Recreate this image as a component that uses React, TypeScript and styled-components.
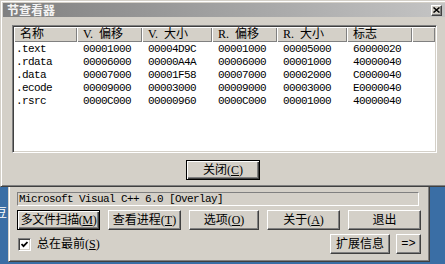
import React from "react";
import styled, { createGlobalStyle, css } from "styled-components";

const FACE = "#d4d0c8";
const SHADOW = "#808080";
const DARK = "#404040";
const UI_FONT = `"Liberation Serif", "Noto Sans CJK SC", serif`;
const MONO_FONT = `"Liberation Mono", "DejaVu Sans Mono", monospace`;
const COLUMNS = "63px 65px 70px 65px 70px 65px 1fr";

const GlobalStyle = createGlobalStyle`
  html, body {
    margin: 0;
    padding: 0;
  }
  body {
    background: #3a6ea5;
    font-family: ${UI_FONT};
    font-size: 12px;
    color: #000;
  }
`;

// classic 3D edges
const frameEdge = css`
  border: 1px solid;
  border-color: ${FACE} ${DARK} ${DARK} ${FACE};
  box-shadow: inset 1px 1px 0 #fff, inset -1px -1px 0 ${SHADOW};
`;

const sunkenEdge = css`
  border: 1px solid;
  border-color: ${SHADOW} #fff #fff ${SHADOW};
  box-shadow: inset 1px 1px 0 ${DARK}, inset -1px -1px 0 ${FACE};
`;

const Desktop = styled.div`
  position: relative;
  width: 445px;
  height: 264px;
  overflow: hidden;
  background: #3a6ea5;
`;

const IconLabel = styled.span`
  position: absolute;
  left: -5px;
  top: 205px;
  color: #fff;
  font-family: "Noto Sans CJK SC", sans-serif;
  font-size: 12px;
  line-height: 14px;
`;

const Dialog = styled.div`
  position: absolute;
  left: 0;
  top: 0;
  z-index: 2;
  box-sizing: border-box;
  width: 448px;
  height: 187px;
  padding: 2px;
  background: ${FACE};
  ${frameEdge}
  display: flex;
  flex-direction: column;
`;

const TitleBar = styled.div`
  height: 14px;
  display: flex;
  align-items: center;
  padding: 0 3px 0 4px;
  background: linear-gradient(to right, #808080, #c4c4c4);
`;

const TitleText = styled.span`
  flex: 1;
  color: #f4f4f4;
  font-family: "Noto Sans CJK SC", sans-serif;
  font-weight: bold;
  font-size: 12px;
  line-height: 14px;
`;

const CloseBox = styled.div`
  box-sizing: border-box;
  width: 11px;
  height: 11px;
  background: ${FACE};
  border: 1px solid;
  border-color: #fff ${DARK} ${DARK} #fff;
  box-shadow: inset -1px -1px 0 ${SHADOW};
  display: flex;
  align-items: center;
  justify-content: center;
`;

const DialogBody = styled.div`
  flex: 1;
  display: flex;
  flex-direction: column;
  padding: 8px 8px 0 9px;
`;

const ListView = styled.div`
  box-sizing: border-box;
  height: 128px;
  padding: 1px;
  background: #fff;
  ${sunkenEdge}
`;

const HeaderRow = styled.div`
  display: grid;
  grid-template-columns: ${COLUMNS};
  height: 15px;
`;

const HeaderCell = styled.div`
  box-sizing: border-box;
  padding-left: 6px;
  background: ${FACE};
  box-shadow: inset 1px 1px 0 #fff, inset -1px -1px 0 ${SHADOW};
  font-size: 12px;
  line-height: 15px;
  white-space: pre;
  overflow: hidden;
`;

const Rows = styled.div`
  padding-top: 1px;
`;

const DataRow = styled.div`
  display: grid;
  grid-template-columns: ${COLUMNS};
  height: 13px;
`;

const DataCell = styled.div<{ $first?: boolean }>`
  padding-left: ${(p) => (p.$first ? 2 : 6)}px;
  font-family: ${MONO_FONT};
  font-size: 11px;
  letter-spacing: -0.6px;
  line-height: 13px;
  white-space: nowrap;
`;

const PushButton = styled.button<{ $w: number; $default?: boolean }>`
  box-sizing: border-box;
  width: ${(p) => p.$w}px;
  height: 20px;
  flex: none;
  padding: 0;
  margin: 0;
  background: ${FACE};
  color: #000;
  font-family: ${UI_FONT};
  font-size: 12px;
  line-height: 16px;
  display: flex;
  align-items: center;
  justify-content: center;
  white-space: nowrap;
  ${(p) =>
    p.$default
      ? css`
          border: 1px solid #000;
          box-shadow: inset 1px 1px 0 #fff, inset -1px -1px 0 ${DARK},
            inset -2px -2px 0 ${SHADOW};
        `
      : css`
          border: 1px solid;
          border-color: #fff ${DARK} ${DARK} #fff;
          box-shadow: inset -1px -1px 0 ${SHADOW};
        `}
`;

const Label = styled.span<{ $tight?: boolean }>`
  letter-spacing: ${(p) => (p.$tight ? "-0.4px" : "0")};
`;

const CloseButton = styled(PushButton)`
  align-self: center;
  margin-top: 7px;
  margin-left: -3px;
`;

const Arrow = styled.span`
  font-family: ${MONO_FONT};
  font-size: 12px;
`;

const MainWindow = styled.div`
  position: absolute;
  left: 8px;
  top: 180px;
  z-index: 1;
  box-sizing: border-box;
  width: 422px;
  height: 82px;
  padding: 11px 8px 0 8px;
  background: ${FACE};
  ${frameEdge}
  display: flex;
  flex-direction: column;
  gap: 4px;
`;

const ResultField = styled.div`
  box-sizing: border-box;
  width: 402px;
  height: 14px;
  padding-left: 1px;
  border: 1px solid;
  border-color: ${SHADOW} #fff #fff ${SHADOW};
  font-family: ${MONO_FONT};
  font-size: 11px;
  letter-spacing: -0.6px;
  line-height: 12px;
  white-space: nowrap;
`;

const ButtonRow = styled.div`
  display: flex;
  gap: 8px;
`;

const BottomRow = styled.div`
  display: flex;
  align-items: center;
  justify-content: space-between;
  height: 20px;
`;

const CheckLabel = styled.label`
  display: flex;
  align-items: center;
  gap: 6px;
  margin-left: 1px;
  font-size: 12px;
  line-height: 14px;
`;

const CheckBox = styled.span`
  box-sizing: border-box;
  width: 13px;
  height: 13px;
  background: #fff;
  ${sunkenEdge}
  display: flex;
  align-items: center;
  justify-content: center;
`;

const RightButtons = styled.div`
  display: flex;
  gap: 6px;
`;

const sections = [
  [".text", "00001000", "00004D9C", "00001000", "00005000", "60000020"],
  [".rdata", "00006000", "00000A4A", "00006000", "00001000", "40000040"],
  [".data", "00007000", "00001F58", "00007000", "00002000", "C0000040"],
  [".ecode", "00009000", "00003000", "00009000", "00003000", "E0000040"],
  [".rsrc", "0000C000", "00000960", "0000C000", "00001000", "40000040"],
];

const headers = ["名称", "V.  偏移", "V.  大小", "R.  偏移", "R.  大小", "标志", ""];

const App: React.FC = () => {
  return (
    <Desktop>
      <GlobalStyle />
      <IconLabel>豆</IconLabel>

      <MainWindow>
        <ResultField>Microsoft Visual C++ 6.0 [Overlay]</ResultField>
        <ButtonRow>
          <PushButton $w={83} $default>
            <Label $tight>
              多文件扫描(<u>M</u>)
            </Label>
          </PushButton>
          <PushButton $w={73}>
            <Label>
              查看进程(<u>T</u>)
            </Label>
          </PushButton>
          <PushButton $w={70}>
            <Label>
              选项(<u>O</u>)
            </Label>
          </PushButton>
          <PushButton $w={73}>
            <Label>
              关于(<u>A</u>)
            </Label>
          </PushButton>
          <PushButton $w={73}>
            <Label>退出</Label>
          </PushButton>
        </ButtonRow>
        <BottomRow>
          <CheckLabel>
            <CheckBox>
              <svg width="7" height="7" viewBox="0 0 7 7">
                <path d="M0.5 3 L2.5 5.2 L6.5 1" fill="none" stroke="#000" strokeWidth="1.8" />
              </svg>
            </CheckBox>
            <span>
              总在最前(<u>S</u>)
            </span>
          </CheckLabel>
          <RightButtons>
            <PushButton $w={60}>
              <Label>扩展信息</Label>
            </PushButton>
            <PushButton $w={25}>
              <Arrow>=&gt;</Arrow>
            </PushButton>
          </RightButtons>
        </BottomRow>
      </MainWindow>

      <Dialog>
        <TitleBar>
          <TitleText>节查看器</TitleText>
          <CloseBox>
            <svg width="7" height="6" viewBox="0 0 7 6">
              <path d="M0.5 0.5 L6.5 5.5 M6.5 0.5 L0.5 5.5" stroke="#000" strokeWidth="1.5" />
            </svg>
          </CloseBox>
        </TitleBar>
        <DialogBody>
          <ListView>
            <HeaderRow>
              {headers.map((h, i) => (
                <HeaderCell key={i}>{h}</HeaderCell>
              ))}
            </HeaderRow>
            <Rows>
              {sections.map((row) => (
                <DataRow key={row[0]}>
                  {row.map((v, i) => (
                    <DataCell key={i} $first={i === 0}>
                      {v}
                    </DataCell>
                  ))}
                </DataRow>
              ))}
            </Rows>
          </ListView>
          <CloseButton $w={74} $default>
            <Label>
              关闭(<u>C</u>)
            </Label>
          </CloseButton>
        </DialogBody>
      </Dialog>
    </Desktop>
  );
};

export default App;
